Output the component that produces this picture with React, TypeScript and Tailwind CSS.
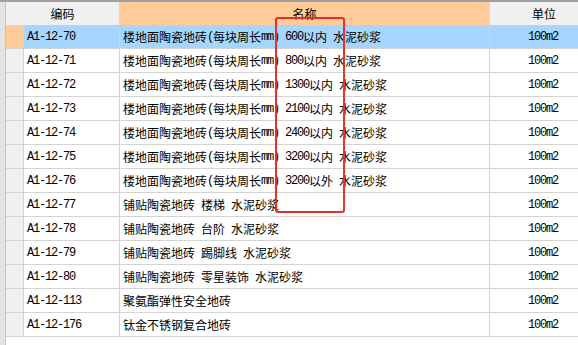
const rows = [
  { code: "A1-12-70", name: "楼地面陶瓷地砖(每块周长mm) 600以内 水泥砂浆" },
  { code: "A1-12-71", name: "楼地面陶瓷地砖(每块周长mm) 800以内 水泥砂浆" },
  { code: "A1-12-72", name: "楼地面陶瓷地砖(每块周长mm) 1300以内 水泥砂浆" },
  { code: "A1-12-73", name: "楼地面陶瓷地砖(每块周长mm) 2100以内 水泥砂浆" },
  { code: "A1-12-74", name: "楼地面陶瓷地砖(每块周长mm) 2400以内 水泥砂浆" },
  { code: "A1-12-75", name: "楼地面陶瓷地砖(每块周长mm) 3200以内 水泥砂浆" },
  { code: "A1-12-76", name: "楼地面陶瓷地砖(每块周长mm) 3200以外 水泥砂浆" },
  { code: "A1-12-77", name: "铺贴陶瓷地砖 楼梯 水泥砂浆" },
  { code: "A1-12-78", name: "铺贴陶瓷地砖 台阶 水泥砂浆" },
  { code: "A1-12-79", name: "铺贴陶瓷地砖 踢脚线 水泥砂浆" },
  { code: "A1-12-80", name: "铺贴陶瓷地砖 零星装饰 水泥砂浆" },
  { code: "A1-12-113", name: "聚氨酯弹性安全地砖" },
  { code: "A1-12-176", name: "钛金不锈钢复合地砖" },
];

const cjk = { fontFamily: '"Noto Sans CJK SC", "Noto Sans", sans-serif' };
const mono = { fontFamily: '"Liberation Mono", monospace' };

// ascii runs get half-width (6px) cells like the original bitmap font
function Mixed({ text }: { text: string }) {
  const parts = text.match(/[\x00-\x7f]+|[^\x00-\x7f]+/g) || [];
  return (
    <>
      {parts.map((p, i) =>
        /^[\x00-\x7f]/.test(p) ? (
          <span key={i} className="tracking-[-1.2px] whitespace-pre" style={mono}>
            {p}
          </span>
        ) : (
          <span key={i}>{p}</span>
        )
      )}
    </>
  );
}

export default function App() {
  return (
    <div className="relative w-[578px] h-[345px] overflow-hidden bg-white text-black text-[12px]" style={cjk}>
      <div className="h-[2px] bg-[#a0a0a0]" />
      <div className="flex h-[343px]">
        <div className="w-[6px] shrink-0 bg-[#e3e3e3] border-r border-[#c4c4c4]" />
        <div className="flex-1 flex flex-col">
          {/* header */}
          <div className="flex h-[23px] shrink-0">
            <div className="w-[114px] shrink-0 bg-[#f0f0f0] flex items-center justify-center border-r border-[#d8d8d8]">
              编码
            </div>
            <div className="w-[370px] shrink-0 bg-[#ffcc99] flex items-center justify-center border-r border-[#d8d8d8]">
              名称
            </div>
            <div className="flex-1 bg-[#f0f0f0] flex items-center pl-[42px]">单位</div>
          </div>
          {/* body */}
          {rows.map((r, i) => {
            const sel = i === 0;
            return (
              <div key={r.code} className="flex h-[24px] shrink-0">
                <div
                  className={`w-[18px] shrink-0 border-r border-b border-[#d4d4d4] ${sel ? "bg-[#ffcc99]" : "bg-[#f0f0f0]"}`}
                />
                <div
                  className={`w-[96px] shrink-0 border-r border-b border-[#d4d4d4] flex items-center pl-[3px] ${sel ? "bg-[#a6d6ff]" : ""}`}
                >
                  <span className="text-[12px] tracking-[-1.2px]" style={mono}>
                    {r.code}
                  </span>
                </div>
                <div
                  className={`w-[370px] shrink-0 border-r border-b border-[#d4d4d4] flex items-center pl-[3px] whitespace-pre overflow-hidden ${sel ? "bg-[#a6d6ff]" : ""}`}
                >
                  <Mixed text={r.name} />
                </div>
                <div
                  className={`flex-1 border-b border-[#d4d4d4] flex items-center justify-end pr-[20px] ${sel ? "bg-[#a6d6ff]" : ""}`}
                >
                  <span className="text-[12px] tracking-[-1.2px]" style={mono}>
                    100m2
                  </span>
                </div>
              </div>
            );
          })}
        </div>
      </div>
      {/* red highlight box */}
      <div className="absolute left-[275px] top-[17px] w-[70px] h-[196px] border-2 border-[#e8302a] rounded-[3px]" />
    </div>
  );
}
